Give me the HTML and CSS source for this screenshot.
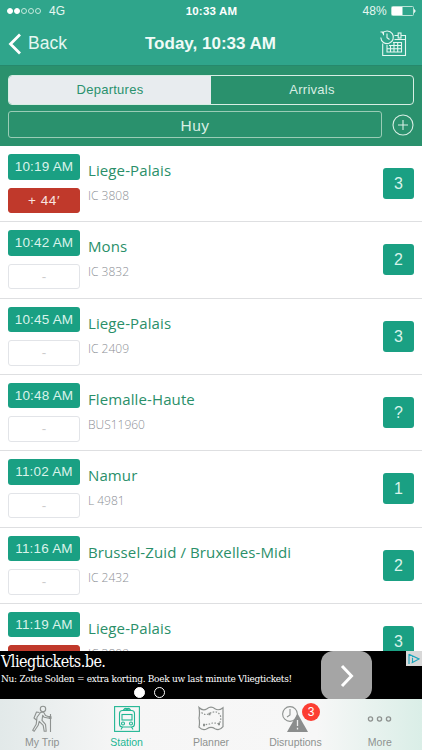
FILE: index.html
```html
<!DOCTYPE html>
<html lang="en">
<head>
  <meta charset="utf-8">
  <meta name="viewport" content="width=device-width, initial-scale=1">
  <title>Station - Huy</title>
  <link rel="stylesheet" href="styles.css">
</head>
<body>
  <div class="app">
    <header class="top">
      <div class="status">
        <div class="signal">
          <i class="dot full"></i><i class="dot full"></i><i class="dot"></i><i class="dot"></i><i class="dot"></i>
          <span class="network">4G</span>
        </div>
        <b class="clock">10:33 AM</b>
        <div class="power">
          <span>48%</span>
          <svg width="26" height="12" viewBox="0 0 26 12">
            <rect x=".5" y="1.5" width="22" height="9" rx="1" fill="none" stroke="#b9e3d6"/>
            <path d="M1 2h10.500v8H1z" fill="#fff"/>
            <path d="M23.500 4.500q1.500 1.500 0 3z" fill="#fff" stroke="#fff" stroke-width=".7"/>
          </svg>
        </div>
      </div>
      <nav class="nav">
        <a class="back">
          <svg width="14" height="22" viewBox="0 0 14 22"><path d="M12 1.500L2.500 11l9.500 9.500" fill="none" stroke="#fff" stroke-width="2.800"/></svg>
          <span>Back</span>
        </a>
        <h1>Today, 10:33 AM</h1>
        <svg class="calendar" width="28" height="28" viewBox="0 0 28 28" fill="none" stroke="#e6f7f1" stroke-width="1.100">
          <path d="M2.700 13.500v12h22.800V5.500H21M14.500 5.500H18M14.500 9.500h11"/>
          <rect x="18.200" y="3" width="2.800" height="5"/>
          <path d="M7 15v7h14.500v-9.500H13M7 18.700h14.500M9 15.500h12.500M10.500 15v7M14 12.500V22M17.700 12.500V22"/>
          <path d="M2.200 3.300A6.300 6.300 0 1 1 .8 7.500M.5 2h3v3.200M7 3.500v4.200l2.500 1.800"/>
        </svg>
      </nav>
    </header>

    <section class="search">
      <div class="tabs">
        <span class="tab active">Departures</span>
        <span class="tab">Arrivals</span>
      </div>
      <div class="station-row">
        <div class="station">Huy</div>
        <svg width="22" height="22" viewBox="0 0 22 22" fill="none" stroke="#d8eee4" stroke-width="1.100">
          <circle cx="11" cy="11" r="10"/><path d="M11 6v10M6 11h10"/>
        </svg>
      </div>
    </section>

    <main class="list">
      <div class="train">
        <div class="times"><span class="time">10:19 AM</span><span class="delay late">+ 44′</span></div>
        <div class="info"><h2>Liege-Palais</h2><p>IC 3808</p></div>
        <span class="platform">3</span>
      </div>
      <div class="train">
        <div class="times"><span class="time">10:42 AM</span><span class="delay">-</span></div>
        <div class="info"><h2>Mons</h2><p>IC 3832</p></div>
        <span class="platform">2</span>
      </div>
      <div class="train">
        <div class="times"><span class="time">10:45 AM</span><span class="delay">-</span></div>
        <div class="info"><h2>Liege-Palais</h2><p>IC 2409</p></div>
        <span class="platform">3</span>
      </div>
      <div class="train">
        <div class="times"><span class="time">10:48 AM</span><span class="delay">-</span></div>
        <div class="info"><h2>Flemalle-Haute</h2><p>BUS11960</p></div>
        <span class="platform">?</span>
      </div>
      <div class="train">
        <div class="times"><span class="time">11:02 AM</span><span class="delay">-</span></div>
        <div class="info"><h2>Namur</h2><p>L 4981</p></div>
        <span class="platform">1</span>
      </div>
      <div class="train">
        <div class="times"><span class="time">11:16 AM</span><span class="delay">-</span></div>
        <div class="info"><h2>Brussel-Zuid / Bruxelles-Midi</h2><p>IC 2432</p></div>
        <span class="platform">2</span>
      </div>
      <div class="train">
        <div class="times"><span class="time">11:19 AM</span><span class="delay late"></span></div>
        <div class="info"><h2>Liege-Palais</h2><p>IC 3809</p></div>
        <span class="platform">3</span>
      </div>
    </main>

    <aside class="ad">
      <div class="ad-text">
        <h3>Vliegtickets.be.</h3>
        <p>Nu: Zotte Solden = extra korting. Boek uw last minute Vliegtickets!</p>
      </div>
      <div class="pager"><i class="page on"></i><i class="page"></i></div>
      <div class="ad-go">
        <svg width="16" height="24" viewBox="0 0 16 24"><path d="M3 2l9.500 10L3 22" fill="none" stroke="#fff" stroke-width="3"/></svg>
      </div>
      <div class="ad-mark">
        <svg width="12" height="12" viewBox="0 0 12 12" fill="none" stroke="#19a5bd" stroke-width="1.100"><path d="M1 1.200L11 6 3.500 10M1 1v10M4.500 5v4.500M4.500 3.500v.8"/></svg>
      </div>
    </aside>

    <footer class="tabbar">
      <a class="item">
        <svg width="26" height="28" viewBox="0 0 26 28" fill="none" stroke="#8e9290" stroke-width="1.100" stroke-linejoin="round">
          <circle cx="14" cy="4" r="2.700"/>
          <path d="M11.500 7.500l3-.5 2 3.500 4 1.500-.3 1.300-5-1-1.500-2-.7 5 3.500 4 .7 7h-2l-1-6-4-4-1 4-4 6-1.500-1 3.500-6 .8-7z"/>
          <path d="M10.500 7.500L7.500 7l-2.500 6 3 2.500M21.500 9v18M20 11.500h2v2h-2"/>
        </svg>
        <span>My Trip</span>
      </a>
      <a class="item active">
        <svg width="26" height="28" viewBox="0 0 26 28" fill="none" stroke="#22b693" stroke-width="1.100">
          <rect x=".6" y="1.600" width="24.800" height="24.800"/>
          <rect x="5.500" y="5.500" width="15" height="16.500" rx="3"/>
          <rect x="8" y="9.500" width="10" height="5.500"/>
          <path d="M9 5.500l1.500-1.800h5l1.500 1.800M8.500 22l-1.500 2.500M17.500 22l1.500 2.500"/>
          <circle cx="9" cy="18.500" r="1.500"/><circle cx="17" cy="18.500" r="1.500"/><circle cx="11.800" cy="4.300" r="1"/><circle cx="14.200" cy="4.300" r="1"/>
        </svg>
        <span>Station</span>
      </a>
      <a class="item">
        <svg width="26" height="28" viewBox="0 0 26 28" fill="none" stroke="#8e9290" stroke-width="1.200">
          <path d="M1 2.500q4 4 8 1.200 4-3 8 0 3.500 2.500 8-1v19q-3.500 4.500-8 2-4-2.500-8 0-4 2.500-8-1.500q1-5 0-9 1-5 0-10.700z"/>
          <path d="M3.500 7.500q3 3 7 1.500 9-5 12 2 1 4-1.500 8-6-2-9.500 0L6 20" stroke-dasharray="1.500 1.500"/>
          <path d="M10.500 9h2M5 20h2M20 19h2" stroke-width="2.500"/>
        </svg>
        <span>Planner</span>
      </a>
      <a class="item">
        <svg width="26" height="28" viewBox="0 0 26 28" fill="none" stroke="#8e9290" stroke-width="1.100">
          <circle cx="8" cy="9" r="7.400"/><path d="M8 4v6l-3 2"/>
          <path d="M15.500 8.500L26 27H5z" fill="#8b8d8d" stroke="none"/>
          <path d="M15.500 15v6M15.500 22.800v1.700" stroke="#eee" stroke-width="1.300"/>
        </svg>
        <b class="badge">3</b>
        <span>Disruptions</span>
      </a>
      <a class="item">
        <svg width="26" height="28" viewBox="0 0 26 28" fill="none" stroke="#8e9290" stroke-width="1.300">
          <circle cx="3.500" cy="14" r="2.100"/><circle cx="12.500" cy="14" r="2.100"/><circle cx="21.500" cy="14" r="2.100"/>
        </svg>
        <span>More</span>
      </a>
    </footer>
  </div>
</body>
</html>
```
FILE: styles.css
```css
* {
  box-sizing: border-box;
}
body, h1, h2, h3, p {
  margin: 0;
  font-weight: normal;
}
body {
  font-family: "Liberation Sans", Arial, sans-serif;
  background: #fff;
}
svg {
  display: block;
  flex: none;
}
.app {
  width: 422px;
  height: 750px;
  display: flex;
  flex-direction: column;
  overflow: hidden;
}

/* header */
.top {
  height: 65px;
  flex: none;
  background: #2fa58b;
  color: #fff;
}
.status {
  height: 22px;
  padding: 0 6px 0 7px;
  display: grid;
  grid-template-columns: 1fr auto 1fr;
  align-items: center;
  font-size: 12px;
}
.signal, .power {
  display: flex;
  align-items: center;
  color: #e6f7f1;
}
.signal {
  gap: 1px;
}
.dot {
  width: 6px;
  height: 6px;
  border: 1px solid #c4e8dc;
  border-radius: 50%;
}
.dot.full {
  background: #fff;
  border-color: #fff;
}
.network {
  margin-left: 7px;
}
.clock {
  font-size: 11.5px;
  letter-spacing: 0.2px;
}
.power {
  justify-content: flex-end;
  gap: 4px;
  margin-right: -1px;
  letter-spacing: 0.2px;
}
.nav {
  height: 43px;
  padding: 0 16px 0 8px;
  display: grid;
  grid-template-columns: 1fr auto 1fr;
  align-items: center;
}
.back {
  display: flex;
  align-items: center;
  gap: 6px;
  font-size: 17.500px;
  color: #e6f7f1;
}
.nav h1 {
  font-size: 17px;
  font-weight: bold;
  color: #f0fbf7;
  margin-left: 7px;
}
.calendar {
  justify-self: end;
  margin-right: -2px;
}

/* search */
.search {
  height: 81px;
  flex: none;
  padding: 9px 8px 0;
  background: #2a916d;
  border-top: 1px solid #26896c;
  color: #d8eee4;
}
.tabs {
  height: 30px;
  display: flex;
  border: 1px solid #d8eee4;
  border-radius: 4px;
  overflow: hidden;
}
.tab {
  flex: 1;
  line-height: 28px;
  text-align: center;
  font-size: 13px;
  letter-spacing: 0.25px;
}
.tab.active {
  background: #e8ecef;
  color: #2a916d;
}
.station-row {
  display: flex;
  align-items: center;
  gap: 10px;
  margin-top: 6px;
}
.station {
  width: 374px;
  height: 27px;
  line-height: 27px;
  border: 1px solid #9accb6;
  border-radius: 3px;
  text-align: center;
  font-size: 15.500px;
  letter-spacing: 0.5px;
}

/* trains */
.list {
  flex: 1;
  min-height: 0;
  overflow: hidden;
}
.train {
  height: 76.33px;
  padding: 8px 8px 0;
  display: flex;
  border-bottom: 1px solid #dedfe1;
}
.times {
  width: 72px;
  display: flex;
  flex-direction: column;
  gap: 8px;
}
.time, .delay {
  height: 25.500px;
  line-height: 26px;
  border-radius: 3px;
  text-align: center;
  font-size: 13.500px;
}
.time {
  background: #1aa083;
  color: #d9f3ea;
  letter-spacing: 0.2px;
}
.delay {
  border: 1px solid #e2e4e8;
  line-height: 23px;
  color: #ccc;
}
.delay.late {
  background: #c0392b;
  border-color: #c0392b;
  color: #f8e4e0;
  letter-spacing: 0.6px;
}
.info {
  flex: 1;
  padding-left: 8px;
  font-family: "Open Sans", sans-serif;
}
.info h2 {
  font-size: 15px;
  letter-spacing: 0.11px;
  line-height: 20px;
  margin-top: 6px;
  color: #2a8f69;
}
.info p {
  margin-top: 8px;
  font-size: 12px;
  line-height: 16px;
  font-weight: 300;
  color: #8c8f96;
}
.platform {
  width: 31px;
  height: 31px;
  line-height: 31px;
  margin-top: 14px;
  border-radius: 3px;
  background: #1aa083;
  color: #d9f3ea;
  text-align: center;
  font-size: 16px;
}

/* ad */
.ad {
  position: relative;
  height: 48px;
  flex: none;
  background: #000;
  color: #fff;
  font-family: "DejaVu Serif Condensed", "DejaVu Serif", serif;
  overflow: hidden;
}
.ad-text {
  padding-left: 1px;
  white-space: nowrap;
}
.ad h3 {
  font-size: 16px;
  line-height: 22px;
  letter-spacing: -0.54px;
}
.ad p {
  font-size: 10px;
  line-height: 12px;
  letter-spacing: -0.29px;
}
.pager {
  position: absolute;
  left: 134px;
  bottom: 1px;
  display: flex;
  gap: 9px;
}
.page {
  width: 11px;
  height: 11px;
  border: 1px solid #fff;
  border-radius: 50%;
}
.page.on {
  background: #fff;
}
.ad-go {
  position: absolute;
  left: 321px;
  top: 0;
  width: 51px;
  height: 49px;
  border-radius: 12px;
  background: #a5a5a5;
  display: flex;
  align-items: center;
  justify-content: center;
}
.ad-mark {
  position: absolute;
  right: 0;
  top: 0;
  width: 16px;
  height: 15px;
  padding: 2px;
  background: #d8d8d8;
}

/* tab bar */
.tabbar {
  height: 51px;
  flex: none;
  display: grid;
  grid-template-columns: repeat(5, 1fr);
  background: linear-gradient(90deg, #e2e9e9, #f6f6f6 28%, #f7f7f7 75%, #daeee7);
}
.item {
  position: relative;
  display: flex;
  flex-direction: column;
  align-items: center;
  padding-top: 6px;
  font-size: 10.500px;
  line-height: 12px;
  color: #8e9290;
}
.item span {
  margin-top: 3px;
}
.item.active {
  color: #22b693;
}
.badge {
  position: absolute;
  left: 49px;
  top: 4px;
  width: 18px;
  height: 18px;
  line-height: 18px;
  border-radius: 50%;
  background: #fc3d32;
  color: #fff;
  font-size: 12px;
  font-weight: normal;
  text-align: center;
}
```
